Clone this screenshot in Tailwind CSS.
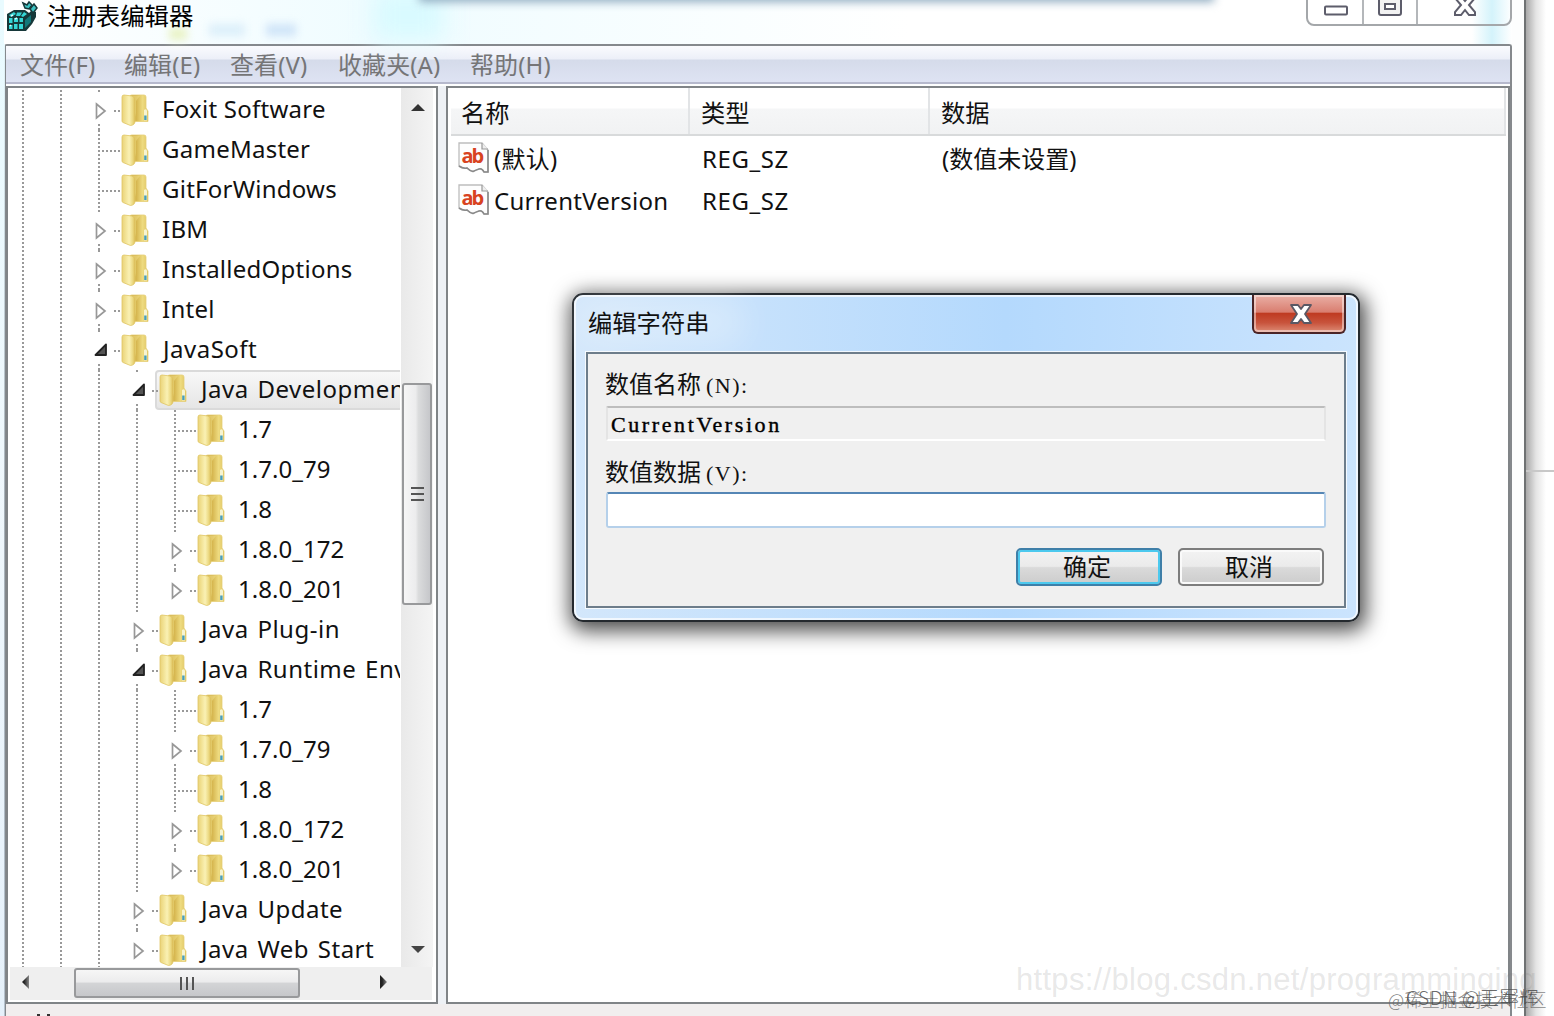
<!DOCTYPE html>
<html lang="zh-CN">
    <head>
        <meta charset="UTF-8" />
        <title>注册表编辑器</title>
        <script src="https://cdn.jsdelivr.net/npm/@tailwindcss/browser@4"></script>
    </head>

    <body class="bg-white overflow-hidden">
        <!-- shared symbols -->
        <svg class="absolute w-0 h-0">
            <defs>
                <linearGradient id="g-front" x1="0" x2="1">
                    <stop offset="0" stop-color="#ead27a" />
                    <stop offset="0.2" stop-color="#f0de8c" />
                    <stop offset="0.55" stop-color="#faf1b4" />
                    <stop offset="0.85" stop-color="#ead67c" />
                    <stop offset="1" stop-color="#d8b852" />
                </linearGradient>
                <linearGradient id="g-back" x1="0" x2="1">
                    <stop offset="0" stop-color="#cdaa45" />
                    <stop offset="0.35" stop-color="#d6b64f" />
                    <stop offset="0.7" stop-color="#eedb80" />
                    <stop offset="1" stop-color="#e0c560" />
                </linearGradient>
                <linearGradient id="g-arrow" x1="0" x2="1">
                    <stop offset="0.3" stop-color="#222" />
                    <stop offset="1" stop-color="#888" />
                </linearGradient>
                <symbol id="folder" viewBox="0 0 28 34">
                    <path d="M9 3 Q9 2 11 2 H23 Q25 2 25 4 V15 L27 18 V28.500 H9Z" fill="url(#g-back)" stroke="#e6cf78" stroke-width="0.8" />
                    <path d="M11 3 H19 L15 8 V20 L13 28Z" fill="#f1e08a" opacity="0.5" />
                    <path d="M1 4 Q1 2 3 2 L11 3 Q14 4 14 7 V28 Q14 32 9.500 32.500 L2 29.500 Q1 29 1 28Z" fill="url(#g-front)" stroke="#dfc562" stroke-width="0.8" />
                    <path d="M23 17 Q25.500 15 26 18 V27.500 H23Z" fill="#f7f4d0" />
                    <rect x="23.200" y="22.500" width="2.400" height="4.500" fill="#4a9fb8" />
                </symbol>
                <symbol id="closed" viewBox="0 0 12 18">
                    <path d="M1.500 2 L10 9 L1.500 16Z" fill="#fff" stroke="#989898" stroke-width="1.700" />
                </symbol>
                <symbol id="opened" viewBox="0 0 14 14">
                    <path d="M12 1.500 V12 H1.500Z" fill="#555" stroke="#222" stroke-width="1.800" stroke-linejoin="round" />
                </symbol>
                <symbol id="reg-sz" viewBox="0 0 34 34">
                    <path d="M2 2 H25 L31 9 V31 L27 31 Q25 27 22 28 Q19 29 16 30.500 Q13 30 10 27 Q6 28 2 25Z" fill="#fdfdfd" stroke="#bdbdbd" stroke-width="1.300" />
                    <path d="M31 9 V31 L27 31 Q25 27 22 28 Q19 29 16 30.500 Q13 30 10 27 Q6 28 2 25" fill="none" stroke="#8a8a8a" stroke-width="1.600" />
                    <path d="M25 2 V8 H31" fill="#eee" stroke="#999" stroke-width="1.200" />
                    <text x="4.500" y="22" font-family="Open Sans" font-weight="700" font-size="20" textLength="23" fill="#d8431f">ab</text>
                </symbol>
            </defs>
        </svg>

        <div class="relative w-[1554px] h-[1016px] overflow-hidden text-[24px] text-[#111] font-['Noto_Sans','Noto_Sans_CJK_SC',sans-serif]">
            <!-- desktop showing through on the left and right -->
            <div class="absolute left-[1526px] top-0 w-[20px] h-full bg-linear-to-r from-[#aaa] via-[#e4e4e4] to-white"></div>
            <div class="absolute left-[1526px] top-[470px] w-[28px] h-[2px] bg-[#c8c8c8]"></div>

            <!-- main window -->
            <div class="relative flex flex-col w-[1526px] h-full border-r-2 border-[#6f7273] pl-[4px] pr-[12px] bg-[#fdfefe]">
                <div class="absolute left-0 top-0 w-[5px] h-full bg-linear-to-b from-[#e9fbff] via-[#dceefa]/40 to-[#d6e8f8]/60"></div>
                <div class="relative flex h-[44px] shrink-0 bg-linear-to-r from-white via-[#effcff] via-25% to-white to-60%">
                    <div class="absolute left-[370px] top-[-10px] w-[70px] h-[50px] bg-[#d8faff] blur-md"></div>
                    <div class="absolute left-[415px] top-[-18px] w-[795px] h-[20px] bg-[#8fabc0] blur-[5px]"></div>
                    <div class="absolute left-[165px] top-[28px] w-[18px] h-[12px] bg-[#e9f3c4] blur-[4px]"></div>
                    <div class="absolute left-[205px] top-[24px] w-[36px] h-[12px] bg-[#dceffa] blur-[4px]"></div>
                    <div class="absolute left-[262px] top-[24px] w-[30px] h-[12px] bg-[#cfe4f8] blur-[4px]"></div>
                    <div class="absolute left-[1468px] top-0 w-[40px] h-[44px] bg-linear-to-r from-transparent via-[#d4f3fb] to-transparent"></div>
                    <svg class="relative w-[34px] h-[34px]" viewBox="0 0 34 34">
                        <path d="M3 14 L10 10 H21 L25 13 L28 10 L32 12 V17 L28 24 L22 31 H3Z" fill="#16383a" />
                        <g fill="#35d6d6">
                            <path d="M5 15 L10 12 L12 14 L7 17Z M13 12.500 H18 L16 16 H12Z M20 12 L23 14 L19 17 L17 16Z" />
                            <path d="M5 18 H8.500 V23 H5Z M10 18 H14 V22 H10Z M5 25 H8.500 V29 H5Z M10 24 H13.500 V29 H10Z M15 24 H19 V29 H15Z" />
                            <path d="M15.500 18 H19 V22 H15.500Z" />
                        </g>
                        <path d="M21 20 L27 15 V22 L21 28Z" fill="#12777a" />
                        <path d="M19 3 L23 5 L25 2 L28 5 L25 9 L21 8Z" fill="#3cc4c4" stroke="#16383a" stroke-width="1.500" />
                        <path d="M26 9 L30 4 L33 8 L29 13Z" fill="#3cc4c4" stroke="#16383a" stroke-width="1.500" />
                        <path d="M7 16 L9 15 M11 19 L13 18 M6 26 L7 25" stroke="#dff" stroke-width="1.500" />
                    </svg>
                    <h1 class="relative ml-[9px] mt-[-2px] h-[36px] leading-[36px] text-[24.400px] text-black">注册表编辑器</h1>
                    <div class="absolute left-[1302px] top-[-10px] w-[206px] h-[36px] flex border-2 border-[#a4a7aa] rounded-[8px]">
                        <div class="w-[56px] border-r-2 border-[#b4b7ba]"></div>
                        <div class="w-[54px] border-r-2 border-[#b4b7ba]"></div>
                        <svg class="absolute left-0 top-[8px] w-[202px] h-[24px] fill-white stroke-[#5d5d6b] stroke-2" viewBox="0 0 202 24">
                            <rect x="17" y="6.500" width="22" height="8" rx="1" />
                            <path d="M71 -4 H93 V13 Q93 15 91 15 H73 Q71 15 71 13Z" fill="#f2f2f2" />
                            <rect x="77" y="4" width="10" height="5" />
                            <path d="M147 -4 H153 L157 1 L161 -4 H167 V-2 L161 5 L167 12 V15 H161 L157 10 L153 15 H147 V12 L153 5 L147 -2Z" />
                        </svg>
                    </div>
                </div>

                <div class="flex flex-col flex-1 min-h-0 border-2 border-b-0 border-[#85898d] rounded-t-[3px]">
                    <div class="flex h-[38px] shrink-0 pl-[14px] pt-[1px] border-b-2 border-[#b6b9cd] text-[#757577] leading-[36px] tracking-[0.100px] whitespace-nowrap bg-[linear-gradient(to_bottom,#fafbfe_0px,#eceff8_13px,#d5dbea_14px,#dee3f3_36px)]">
                        <div class="w-[104px]">文件(F)</div>
                        <div class="w-[106px]">编辑(E)</div>
                        <div class="w-[108px]">查看(V)</div>
                        <div class="w-[132px]">收藏夹(A)</div>
                        <div>帮助(H)</div>
                    </div>

                    <div class="flex h-[918px] shrink-0 mt-[2px] gap-[8px] bg-[#eef1f5]">
                        <!-- key tree -->
                        <div class="flex flex-col w-[432px] shrink-0 border-2 border-[#808487] bg-white">
                            <div class="flex h-[879px] shrink-0">
                                <div id="tree" class="w-[392px] h-full pt-[2px] overflow-hidden"></div>
                                <div class="relative ml-[1px] w-[32px] h-full bg-linear-to-r from-[#e9e9e9] to-[#f4f4f4]">
                                    <svg class="absolute left-[10px] top-[15px] w-[15px] h-[9px]" viewBox="0 0 15 9"><path d="M0 8 L7 1 L14 8Z" fill="#333" /></svg>
                                    <div class="absolute left-[1px] top-[295px] w-[30px] h-[222px] border-2 border-[#98999b] rounded-[3px] bg-[linear-gradient(to_right,#f6f6f6_0%,#ececed_45%,#dbdcdd_55%,#c6c7ca_100%)] flex flex-col items-center justify-center gap-[4px]">
                                        <div class="w-[13px] h-[2px] bg-[#555]"></div>
                                        <div class="w-[13px] h-[2px] bg-[#555]"></div>
                                        <div class="w-[13px] h-[2px] bg-[#555]"></div>
                                    </div>
                                    <svg class="absolute left-[10px] top-[857px] w-[15px] h-[9px]" viewBox="0 0 15 9"><path d="M0 1 L7 8 L14 1Z" fill="#444" /></svg>
                                </div>
                            </div>
                            <div class="relative ml-[2px] w-[422px] h-[33px] bg-[#efefef]">
                                <svg class="absolute left-[11px] top-[8px] w-[9px] h-[15px]" viewBox="0 0 9 15"><path d="M8 0 L1 7 L8 14Z" fill="url(#g-arrow)" /></svg>
                                <div class="absolute left-[64px] top-[1px] w-[226px] h-[30px] border-2 border-[#98999b] rounded-[3px] bg-[linear-gradient(to_bottom,#f6f6f6_0%,#ececed_45%,#d3d4d6_52%,#c6c7ca_100%)] flex items-center justify-center gap-[4px]">
                                    <div class="w-[2px] h-[13px] bg-[#555]"></div>
                                    <div class="w-[2px] h-[13px] bg-[#555]"></div>
                                    <div class="w-[2px] h-[13px] bg-[#555]"></div>
                                </div>
                                <svg class="absolute left-[369px] top-[8px] w-[9px] h-[15px]" viewBox="0 0 9 15"><path d="M1 0 L8 7 L1 14Z" fill="url(#g-arrow)" /></svg>
                            </div>
                        </div>

                        <!-- value list -->
                        <div class="flex-1 border-2 border-[#808487] bg-white pl-[3px] pr-[2px]">
                            <div class="flex h-[48px] border-b-2 border-[#d8dadb] leading-[50px] text-[24.300px] bg-[linear-gradient(to_bottom,#fff_0px,#fff_20px,#f5f6f7_21px,#f1f2f3_46px)]">
                                <div class="w-[239px] pl-[10px] border-r-2 border-[#e2e4e6]">名称</div>
                                <div class="w-[240px] pl-[11px] border-r-2 border-[#e2e4e6]">类型</div>
                                <div class="flex-1 pl-[11px] border-r-2 border-[#e2e4e6]">数据</div>
                            </div>
                            <div class="flex items-center h-[42px] mt-[2px] leading-[42px]">
                                <div class="flex items-center w-[251px] pl-[6px] tracking-[0.250px]"><svg class="w-[34px] h-[34px] mr-[3px] mt-[-2px]"><use href="#reg-sz" /></svg>(默认)</div>
                                <div class="w-[240px] tracking-[0.600px]">REG_SZ</div>
                                <div>(数值未设置)</div>
                            </div>
                            <div class="flex items-center h-[42px] leading-[42px]">
                                <div class="flex items-center w-[251px] pl-[6px] tracking-[0.250px]"><svg class="w-[34px] h-[34px] mr-[3px] mt-[-2px]"><use href="#reg-sz" /></svg>CurrentVersion</div>
                                <div class="tracking-[0.600px]">REG_SZ</div>
                            </div>
                        </div>
                    </div>
                    <!-- status bar, cut off by the screen edge -->
                    <div class="flex-1 bg-[#f1eeee] pl-[31px] pt-[10px] flex gap-[7px] overflow-hidden">
                        <i class="w-[3px] h-[4px] bg-[#333]"></i>
                        <i class="w-[3px] h-[4px] bg-[#333]"></i>
                    </div>
                </div>
            </div>

            <!-- edit string dialog -->
            <div class="absolute left-[572px] top-[293px] w-[788px] h-[329px] flex flex-col border-2 border-[#24292e] rounded-[11px] shadow-[2px_5px_20px_4px_rgba(0,0,0,0.7)] bg-linear-to-r from-[#d3e7fb] via-[#b4d9fd] via-55% to-[#cbe4fd]">
                <div class="absolute inset-0 border-2 border-white/70 rounded-[9px]"></div>
                <div class="absolute left-[2px] top-[2px] w-[170px] h-[50px] rounded-[30px] bg-white/25 blur-lg"></div>
                <div class="relative flex justify-between h-[57px] shrink-0 pl-[14px] pr-[12px]">
                    <h2 class="leading-[55px] text-[24.300px]">编辑字符串</h2>
                    <button class="w-[94px] h-[39px] flex items-center justify-center border-2 border-t-0 border-[#4a2426] rounded-b-[6px] bg-[linear-gradient(to_bottom,#eab0a6_0%,#d97e70_46%,#bf3b22_50%,#c8533c_75%,#dd8c76_100%)] shadow-[inset_0_0_0_2px_rgba(255,255,255,0.45)]">
                        <svg class="w-[24px] h-[22px] ml-[3px]" viewBox="0 0 24 22"><path d="M2 2 H9 L12 6 L15 2 H22 L16 11 L22 20 H15 L12 16 L9 20 H2 L8 11Z" fill="#fff" stroke="#5a5864" stroke-width="1.800" stroke-linejoin="round" /></svg>
                    </button>
                </div>
                <div class="relative mx-[12px] h-[256px] border-2 border-[#6d7d8b] bg-[#f0f0f0] outline-1 outline-white/80 pl-[18px] pr-[18px]">
                    <div class="h-[52px] leading-[60px] ml-[-1px]">数值名称<span class="pl-[5px] text-[22px] tracking-[1.500px] font-['Liberation_Serif',serif]">(N):</span></div>
                    <div class="h-[35px] leading-[34px] pl-[3px] border-2 border-t-[#bdbdbd] border-x-[#e4e4e4] border-b-white rounded-[2px] text-[22px] tracking-[2.600px] font-['Liberation_Serif',serif] text-black [-webkit-text-stroke:0.400px_#000]">CurrentVersion</div>
                    <div class="h-[51px] leading-[61px] ml-[-1px]">数值数据<span class="pl-[5px] text-[22px] tracking-[1.500px] font-['Liberation_Serif',serif]">(V):</span></div>
                    <div class="h-[36px] border-2 border-t-[#5586b5] border-[#b5d0ea] rounded-[3px] bg-white"></div>
                    <div class="flex justify-end gap-[16px] mt-[20px] pr-[2px] leading-[34px]">
                        <button class="w-[146px] h-[38px] pr-[4px] border-2 border-[#3f7fa8] rounded-[5px] shadow-[inset_0_0_0_2px_#4cc9ee] bg-[linear-gradient(to_bottom,#f3f3f3_0%,#ebebeb_48%,#dadada_52%,#cccccc_100%)]">确定</button>
                        <button class="w-[146px] h-[38px] pr-[4px] border-2 border-[#7d7d7d] rounded-[5px] shadow-[inset_0_0_0_2px_#fafafa] bg-[linear-gradient(to_bottom,#f3f3f3_0%,#ebebeb_48%,#dadada_52%,#cccccc_100%)]">取消</button>
                    </div>
                </div>
            </div>

            <!-- watermarks -->
            <div class="absolute left-[1016px] top-[961px] text-[31px] leading-[38px] tracking-[0.300px] text-[#777]/18 whitespace-nowrap font-['Liberation_Sans',sans-serif]">https://blog.csdn.net/programminging</div>
            <div class="absolute left-[1388px] top-[986px] text-[17.800px] leading-[26px] text-[#666]/80 whitespace-nowrap font-light font-['Noto_Sans_CJK_SC',sans-serif]">@稀土掘金技术社区</div>
            <div class="absolute left-[1406px] top-[984px] text-[19.200px] leading-[26px] tracking-[0.500px] text-[#444]/80 whitespace-nowrap font-light font-['Noto_Sans_CJK_SC',sans-serif]">CSDN @王军辉</div>
        </div>

        <script>
            // [depth, label, state, last] - state: 0 leaf, 1 collapsed, 2 expanded
            const keys = [
                [0, 'Foxit Software', 1],
                [0, 'GameMaster', 0],
                [0, 'GitForWindows', 0],
                [0, 'IBM', 1],
                [0, 'InstalledOptions', 1],
                [0, 'Intel', 1],
                [0, 'JavaSoft', 2],
                [1, 'Java Development Kit', 2],
                [2, '1.7', 0],
                [2, '1.7.0_79', 0],
                [2, '1.8', 0],
                [2, '1.8.0_172', 1],
                [2, '1.8.0_201', 1, 'last'],
                [1, 'Java Plug-in', 1],
                [1, 'Java Runtime Environment', 2],
                [2, '1.7', 0],
                [2, '1.7.0_79', 1],
                [2, '1.8', 0],
                [2, '1.8.0_172', 1],
                [2, '1.8.0_201', 1, 'last'],
                [1, 'Java Update', 1],
                [1, 'Java Web Start', 1, 'last'],
            ];

            const full = '<div class="h-full w-[2px] mx-auto bg-[repeating-linear-gradient(to_bottom,#999_0px,#999_2px,transparent_2px,transparent_4px)]"></div>';
            const col = (inner) => `<div class="relative w-[38px] shrink-0 h-full">${inner}</div>`;
            const hdots = '<div class="absolute left-[22px] top-[20px] h-[2px] w-[18px] bg-[repeating-linear-gradient(to_right,#999_0px,#999_2px,transparent_2px,transparent_4px)]"></div>';
            const hshort = '<div class="absolute left-[34px] top-[20px] h-[2px] w-[6px] bg-[repeating-linear-gradient(to_right,#999_0px,#999_2px,transparent_2px,transparent_4px)]"></div>';
            const topDot = '<div class="absolute left-[18px] top-0 size-[2px] bg-[#999]"></div>';
            const bottomDots = '<div class="absolute left-[18px] bottom-0 w-[2px] h-[6px] bg-[repeating-linear-gradient(to_bottom,#999_0px,#999_2px,transparent_2px,transparent_4px)]"></div>';

            document.getElementById('tree').innerHTML = keys.map(([depth, label, state, last]) => {
                let cols = '';
                for (let i = 0; i < depth + 2; i++) cols += col(full);

                let own = '';
                if (state === 0) own = full + hdots;
                if (state === 1) own = '<svg class="absolute left-[15px] top-[12px] w-[12px] h-[18px]"><use href="#closed" /></svg>';
                if (state === 2) own = '<svg class="absolute left-[14px] top-[13px] w-[14px] h-[14px]"><use href="#opened" /></svg>';
                if (state > 0) own += hshort + topDot + (last ? '' : bottomDots);

                const selected = label.startsWith('Java Development');
                const box = selected
                    ? 'absolute left-[147px] right-[-6px] top-0 h-[40px] border-2 border-[#dadada] rounded-[4px] bg-linear-to-b from-[#f8f8f8] to-[#e6e6e6]'
                    : 'hidden';
                let text = 'ml-[13px] leading-[37px] tracking-[0.250px]';
                if (label[0] === 'J') text = 'ml-[14px] leading-[37px] tracking-[0.500px] [word-spacing:2px]';
                if (label[0] === '1') text = 'ml-[13px] leading-[37px] tracking-[0.050px]';

                return `<div class="relative flex h-[40px] whitespace-nowrap">
                    <div class="${box}"></div>
                    <div class="relative flex ml-[-4px]">${cols}${col(own)}
                        <svg class="w-[28px] h-[34px] mt-[3px] ml-[3px] shrink-0"><use href="#folder" /></svg>
                        <span class="${text}">${label}</span>
                    </div>
                </div>`;
            }).join('');
        </script>
    </body>
</html>
